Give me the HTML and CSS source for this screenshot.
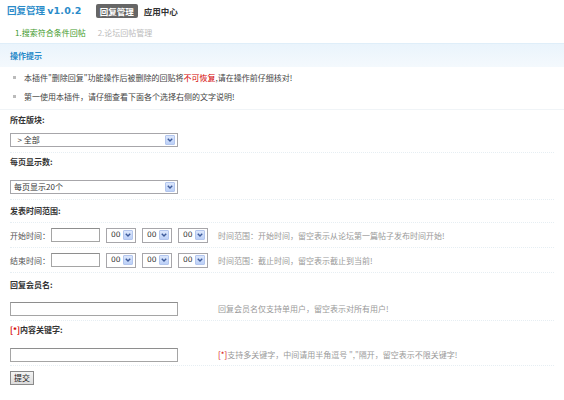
FILE: index.html
```html
<!DOCTYPE html>
<html lang="zh">
<head>
<meta charset="utf-8">
<title>回复管理</title>
<link rel="stylesheet" href="styles.css">
</head>
<body>
<div class="page">
  <div class="topbar">
    <h3 class="title">回复管理 <span class="ver">v1.0.2</span></h3>
    <span class="tab active">回复管理</span>
    <span class="tab">应用中心</span>
  </div>
  <div class="steps">
    <span class="step current">1.搜索符合条件回帖</span>
    <span class="step">2.论坛回帖管理</span>
  </div>
  <div class="tips-head">操作提示</div>
  <ul class="tips">
    <li>本插件"删除回复"功能操作后被删除的回贴将<span class="red">不可恢复</span>,请在操作前仔细核对!</li>
    <li>第一使用本插件，请仔细查看下面各个选择右侧的文字说明!</li>
  </ul>

  <div class="form">
    <div class="label-row r1">所在版块:</div>
    <div class="field-row f1">
      <div class="select wide"><span class="val">&nbsp;&nbsp;&gt; 全部</span><span class="arrow"><svg viewBox="0 0 9 9" width="9" height="9"><path d="M2 3.2 L4.5 5.7 L7 3.2" fill="none" stroke="#3d5a9a" stroke-width="1.6"/></svg></span></div>
    </div>

    <div class="label-row r2">每页显示数:</div>
    <div class="field-row f2">
      <div class="select wide"><span class="val">每页显示20个</span><span class="arrow"><svg viewBox="0 0 9 9" width="9" height="9"><path d="M2 3.2 L4.5 5.7 L7 3.2" fill="none" stroke="#3d5a9a" stroke-width="1.6"/></svg></span></div>
    </div>

    <div class="label-row sep">发表时间范围:</div>
    <div class="time-row">
      <span class="tlabel">开始时间：</span>
      <span class="input short"></span>
      <div class="select small"><span class="val">00</span><span class="arrow"><svg viewBox="0 0 9 9" width="9" height="9"><path d="M2 3.2 L4.5 5.7 L7 3.2" fill="none" stroke="#3d5a9a" stroke-width="1.6"/></svg></span></div>
      <div class="select small"><span class="val">00</span><span class="arrow"><svg viewBox="0 0 9 9" width="9" height="9"><path d="M2 3.2 L4.5 5.7 L7 3.2" fill="none" stroke="#3d5a9a" stroke-width="1.6"/></svg></span></div>
      <div class="select small"><span class="val">00</span><span class="arrow"><svg viewBox="0 0 9 9" width="9" height="9"><path d="M2 3.2 L4.5 5.7 L7 3.2" fill="none" stroke="#3d5a9a" stroke-width="1.6"/></svg></span></div>
      <span class="hint">时间范围：开始时间，留空表示从论坛第一篇帖子发布时间开始!</span>
    </div>
    <div class="time-row">
      <span class="tlabel">结束时间：</span>
      <span class="input short"></span>
      <div class="select small"><span class="val">00</span><span class="arrow"><svg viewBox="0 0 9 9" width="9" height="9"><path d="M2 3.2 L4.5 5.7 L7 3.2" fill="none" stroke="#3d5a9a" stroke-width="1.6"/></svg></span></div>
      <div class="select small"><span class="val">00</span><span class="arrow"><svg viewBox="0 0 9 9" width="9" height="9"><path d="M2 3.2 L4.5 5.7 L7 3.2" fill="none" stroke="#3d5a9a" stroke-width="1.6"/></svg></span></div>
      <div class="select small"><span class="val">00</span><span class="arrow"><svg viewBox="0 0 9 9" width="9" height="9"><path d="M2 3.2 L4.5 5.7 L7 3.2" fill="none" stroke="#3d5a9a" stroke-width="1.6"/></svg></span></div>
      <span class="hint">时间范围：截止时间，留空表示截止到当前!</span>
    </div>

    <div class="label-row r3">回复会员名:</div>
    <div class="field-row f3">
      <span class="input wide"></span>
      <span class="hint">回复会员名仅支持单用户，留空表示对所有用户!</span>
    </div>

    <div class="label-row r4"><span class="red strong">[*]</span>内容关键字:</div>
    <div class="field-row f4">
      <span class="input wide"></span>
      <span class="hint"><span class="red">[*]</span>支持多关键字，中间请用半角逗号 ","隔开，留空表示不限关键字!</span>
    </div>

    <div class="submit-row"><span class="btn">提交</span></div>
  </div>
</div>
</body>
</html>
```

FILE: styles.css
```css
* { box-sizing: border-box; }
html, body { margin: 0; padding: 0; background: #fff; }
body {
  font-family: "Noto Sans CJK SC", "Noto Sans", sans-serif;
  font-size: 8px;
  color: #333;
}
.page { width: 564px; }

.topbar {
  display: flex;
  align-items: center;
  height: 21px;
  padding: 0 0 0 7px;
}
.title {
  margin: 0 14px 0 0;
  font-size: 9.5px;
  font-weight: bold;
  color: #2a8bc9;
  line-height: 14px;
}
.ver { font-family: "DejaVu Sans", sans-serif; font-size: 9.5px; letter-spacing: 0.2px; }
.tab {
  font-size: 8.5px;
  font-weight: bold;
  color: #333;
  padding: 0 3px;
  line-height: 14px;
  margin-right: 3px;
}
.tab.active {
  background: #666;
  color: #fff;
  border-radius: 2px;
  padding: 0 4px;
}

.steps {
  display: flex;
  gap: 12px;
  height: 22px;
  align-items: center;
  padding-left: 15px;
}
.step { color: #bbb; }
.step.current { color: #3f9a2c; }

.tips-head {
  height: 24px;
  line-height: 23px;
  padding-left: 10px;
  background: linear-gradient(#eaf4fc, #f4f9fd);
  border-top: 1px solid #dfeef9;
  color: #2a8bc9;
  font-weight: bold;
}
.tips {
  list-style: none;
  margin: 0;
  padding: 1px 0 3px 0;
  border-bottom: 1px solid #f0f4f7;
}
.tips li {
  position: relative;
  height: 19px;
  line-height: 19px;
  padding-left: 24px;
  color: #444;
}
.tips li::before {
  content: "";
  position: absolute;
  left: 13px;
  top: 8px;
  width: 3px;
  height: 3px;
  background: #bbb;
}
.red { color: #d40000; }
.strong { font-weight: bold; }

.form { padding: 0 10px; }
.label-row {
  height: 20px;
  line-height: 20px;
  font-weight: bold;
  color: #333;
}
.label-row.r2 { height: 18px; line-height: 18px; }
.label-row.r3 { height: 24px; line-height: 24px; }
.label-row.r4 { height: 18px; line-height: 18px; }
.label-row.sep { border-bottom: 1px dotted #e6eef3; height: 23px; line-height: 22px; }
.field-row {
  display: flex;
  align-items: flex-start;
  padding: 3px 0 5px;
  border-bottom: 1px dotted #e6eef3;
}
.field-row.f2 { padding: 9px 0 5px; }
.field-row.f3 { padding: 5px 0 4px; }
.field-row.f4 { padding: 9px 0 3px; }

.select {
  display: flex;
  align-items: center;
  height: 14px;
  border: 1px solid #a7a6aa;
  background: #fff;
  color: #333;
}
.select .val { flex: 1; padding-left: 3px; line-height: 12px; white-space: nowrap; }
.select .arrow {
  width: 10px;
  height: 10px;
  margin-right: 2px;
  background: linear-gradient(#dce7fc, #bcd0f7);
  border: 1px solid #b3c6ee;
  border-radius: 1px;
  display: flex;
  align-items: center;
  justify-content: center;
}
.select .arrow svg { display: block; width: 8px; height: 8px; }
.select.wide { width: 168px; }
.select.small { width: 30px; margin-right: 6px; height: 15px; }
.select.small .val { padding-left: 4px; font-family: "DejaVu Sans", sans-serif; font-size: 7.5px; }

.time-row {
  display: flex;
  align-items: center;
  height: 25px;
  border-bottom: 1px dotted #e6eef3;
}
.tlabel { width: 41px; color: #555; }
.input {
  display: block;
  height: 14px;
  border: 1px solid #a5a5a5;
  border-top-color: #8e8e8e;
  background: #fff;
}
.input.short { width: 49px; margin-right: 6px; }
.input.wide { width: 168px; }
.hint { color: #999; white-space: nowrap; }
.time-row .hint { margin-left: 4px; }
.field-row.f3 .hint, .field-row.f4 .hint { margin-left: 40px; line-height: 14px; }

.submit-row { padding: 5px 0; }
.btn {
  display: inline-block;
  height: 14px;
  line-height: 12px;
  padding: 0 3px;
  border: 1px solid #8a8a8a;
  background: linear-gradient(#f4f4f4, #dcdcdc);
  color: #222;
}
```
